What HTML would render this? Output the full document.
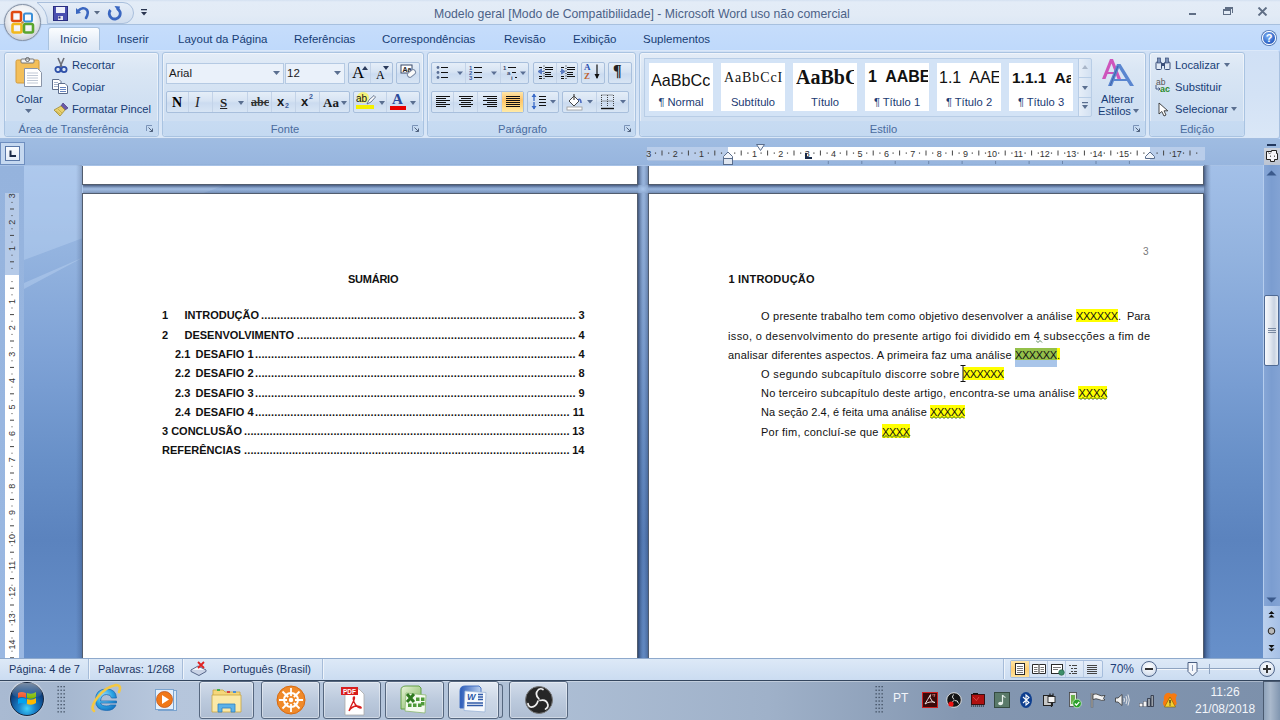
<!DOCTYPE html>
<html><head><meta charset="utf-8">
<style>
*{box-sizing:border-box;margin:0;padding:0}
html,body{width:1280px;height:720px;overflow:hidden;background:#bfdbff;font-family:"Liberation Sans",sans-serif;position:relative}
.a{position:absolute;white-space:nowrap}
#title{left:0;top:0;width:1280px;height:25px;background:linear-gradient(#d3e0f1 0,#e3ecf7 8%,#e2ebf6 60%,#dde8f5);border-bottom:1px solid #a7c0de}
#tabs{left:0;top:25px;width:1280px;height:25px;background:linear-gradient(#c6ddfb,#bfd9fb)}
#ribbon{left:0;top:50px;width:1280px;height:89px;background:linear-gradient(#d0e0f5,#d3e2f5 50%,#dae7f7);border-top:1px solid #dbe8f9;border-right:1px solid #a9c1e0;border-bottom:1px solid #a3bde0;border-radius:0 3px 3px 0}
#rulerrow{left:0;top:139px;width:1280px;height:26px;background:linear-gradient(#9fbce2,#97b5de)}
#docbg{left:24px;top:165px;width:1239px;height:493px;background:linear-gradient(#a3c0e8 0%,#93b3df 18%,#7da1d5 40%,#6890c8 60%,#5b83be 76%,#6790ca 100%)}
#vrulcol{left:0;top:165px;width:24px;height:493px;background:linear-gradient(#95b3dd,#98b6e0 50%,#9ab8e2)}
#status{left:0;top:658px;width:1280px;height:22px;background:linear-gradient(#dde9f7,#cbdcf1);border-top:1px solid #8ea9cc}
#taskbar{left:0;top:680px;width:1280px;height:40px;background:linear-gradient(90deg,#a9bad2 0,#a5b7cf 5%,#b6c6dc 12%,#b3c4da 35%,#9fb1c9 60%,#8497b1 75%,#7c90ab 100%)}
.grp{top:52px;height:85px;border:1px solid #a9c3e1;border-radius:3px;background:linear-gradient(#e3ecf7 0%,#dae6f4 20%,#d0e0f2 60%,#cfdff2 80%);box-shadow:inset 0 0 0 1px rgba(255,255,255,0.45)}
.lbl{top:121px;height:15px;font-size:11.2px;line-height:15px;padding-top:1px;color:#4a6c9e;text-align:center;background:linear-gradient(#c7dbf2,#c4d9f1);border-radius:0 0 3px 3px}
.rt{font-size:11.2px;line-height:14px;color:#173d76}
.tab{top:32px;font-size:11.5px;line-height:14px;color:#173d75}
.combo{border:1px solid #b5cae3;background:#eaf1fa}
.bg{border:1px solid #a8bfdc;border-radius:2px;background:linear-gradient(#e5eef8,#d6e3f3 45%,#cbdbf0 55%,#d8e5f4)}
.dv{width:1px;background:#c3d3e8}
.serif{font-family:"Liberation Serif",serif;line-height:1}
.tile{top:63px;width:64px;height:48px;background:#fff}
.tt{position:absolute;white-space:nowrap;overflow:hidden;line-height:1}
.tl{position:absolute;left:0;top:32px;width:100%;text-align:center;font-size:11.2px;line-height:14px;color:#1b3a72}
.doc{font-size:11px;line-height:13px;color:#111}
.b{font-weight:bold}
.toc{left:162px;width:423px;height:13px}
.toc span{position:absolute;top:0}
.toc .n{left:0}
.toc i{position:absolute;top:0;height:13px;right:16px;background:radial-gradient(circle,#111 0.9px,transparent 1.1px) 0 9.5px/3.07px 3px repeat-x}
.toc .pg{right:0}
.jl{text-align:justify;text-align-last:justify}
.st{top:662px;font-size:11px;line-height:14px;color:#1b3765}
.sep{top:659px;width:2px;height:20px;border-left:1px solid #a6bcd9;border-right:1px solid #eef4fb}
.zc{top:661px;width:16px;height:16px;border-radius:50%;border:1px solid #51678c;background:radial-gradient(circle at 50% 35%,#ffffff,#dfe7f2 60%,#b5c4da)}
.tb{top:681px;height:38px;border:1px solid #56677f;border-radius:3px;background:linear-gradient(#d2dcea,#bccadd 50%,#aebdd2);box-shadow:inset 0 0 0 1px rgba(255,255,255,0.4)}

</style></head><body>
<!-- TITLE BAR -->
<div id="title" class="a"></div>
<div id="tabs" class="a"></div>
<div class="a" style="left:0;top:0;width:48px;height:48px;"></div>
<!-- QAT pill -->
<svg class="a" style="left:0;top:0" width="140" height="26" viewBox="0 0 140 26"><defs><linearGradient id="qg" x1="0" y1="0" x2="0" y2="1"><stop offset="0" stop-color="#e6eef8"/><stop offset="1" stop-color="#d0ddee"/></linearGradient></defs><path d="M37 2.5H123A10.5 10.5 0 0 1 123 23.5H47.5A25 25 0 0 0 37 2.5Z" fill="url(#qg)" stroke="#a9bfdc"/></svg>
<!-- office button -->
<div class="a" style="left:4px;top:4px;width:37px;height:37px;border-radius:50%;background:radial-gradient(circle at 50% 40%,#ffffff 0,#f1f3f6 45%,#c9ced6 80%,#9aa4b3 100%);border:1px solid #8592a6;box-shadow:0 0 1px #6d7d95"></div>
<svg class="a" style="left:9px;top:9px" width="28" height="28" viewBox="0 0 28 28">
 <rect x="3" y="3" width="9" height="9" rx="1.5" fill="none" stroke="#e04a10" stroke-width="2.6"/>
 <rect x="15" y="4.5" width="8" height="8" rx="1.5" fill="none" stroke="#3a8fd8" stroke-width="2"/>
 <rect x="3.5" y="15" width="9" height="8.5" rx="1.5" fill="none" stroke="#f2b81a" stroke-width="2.6"/>
 <rect x="15" y="15" width="9" height="8.5" rx="1.5" fill="none" stroke="#5aa52e" stroke-width="2.6"/>
 <circle cx="13.5" cy="13.5" r="1.3" fill="#c78a3a"/>
</svg>
<!-- save -->
<svg class="a" style="left:53px;top:6px" width="15" height="15" viewBox="0 0 15 15">
 <rect x="0.5" y="0.5" width="14" height="14" fill="#4a4fb0" stroke="#2a2e80"/>
 <rect x="3" y="1" width="9" height="6" fill="#eef0fa"/>
 <rect x="5" y="10" width="5" height="4" fill="#e8e8f0"/>
 <rect x="5.5" y="10.5" width="2" height="2" fill="#2a2e80"/>
</svg>
<!-- undo -->
<svg class="a" style="left:75px;top:5px" width="16" height="16" viewBox="0 0 16 16">
 <path d="M3 6 Q8 1 12 5 Q14 8 11 13" fill="none" stroke="#3a66c0" stroke-width="2.6" stroke-linecap="round"/>
 <path d="M1 3 L1 9 L6 8 Z" fill="#3a66c0"/>
</svg>
<svg class="a" style="left:94px;top:11px" width="6" height="4" viewBox="0 0 6 4"><path d="M0 0H6L3 3.5Z" fill="#5a6b86"/></svg>
<!-- redo -->
<svg class="a" style="left:106px;top:5px" width="16" height="16" viewBox="0 0 16 16">
 <path d="M11 3.5 A5.5 5.5 0 1 1 4.5 5" fill="none" stroke="#3a66c0" stroke-width="2.8"/>
 <path d="M8.5 1 L14 1.5 L12.5 7 Z" fill="#3a66c0"/>
</svg>
<!-- customize -->
<svg class="a" style="left:140px;top:8px" width="8" height="8" viewBox="0 0 8 8"><rect x="1" y="1" width="6" height="1.3" fill="#2a3550"/><path d="M1 4H7L4 7.5Z" fill="#2a3550"/></svg>
<div class="a" style="left:434px;top:7px;font-size:12.25px;color:#4c6287;white-space:pre">Modelo geral [Modo de Compatibilidade] - Microsoft Word uso não comercial</div>
<!-- window controls -->
<div class="a" style="left:1189px;top:12.5px;width:7px;height:2.5px;background:#5f6e85"></div>
<div class="a" style="left:1223px;top:9px;width:8px;height:6px;border:1px solid #5f6e85;border-top-width:2px"></div>
<div class="a" style="left:1225px;top:7px;width:8px;height:6px;border:1px solid #5f6e85;border-top-width:2px;border-left:none;border-bottom:none"></div>
<svg class="a" style="left:1257px;top:7px" width="11" height="9" viewBox="0 0 11 9"><path d="M1.5 0.5L9.5 8.5M9.5 0.5L1.5 8.5" stroke="#5f6e85" stroke-width="1.9"/></svg>
<!-- TABS -->
<div class="a" style="left:48px;top:27px;width:52px;height:24px;border:1px solid #a9c2de;border-bottom:none;border-radius:3px 3px 0 0;background:linear-gradient(#fbfdff,#e6eef8 60%,#dde8f5)"></div>
<div class="a tab" style="left:60px">Início</div>
<div class="a tab" style="left:117px">Inserir</div>
<div class="a tab" style="left:178px">Layout da Página</div>
<div class="a tab" style="left:294px">Referências</div>
<div class="a tab" style="left:382px">Correspondências</div>
<div class="a tab" style="left:504px">Revisão</div>
<div class="a tab" style="left:573px">Exibição</div>
<div class="a tab" style="left:643px">Suplementos</div>
<!-- help -->
<div class="a" style="left:1262px;top:31px;width:14px;height:14px;border-radius:50%;background:radial-gradient(circle at 40% 35%,#7fb3f5,#2a5fc4 70%,#1a3f90);border:1px solid #fff;box-shadow:0 0 0 1px #5b7fb8"></div>
<div class="a" style="left:1262px;top:31px;width:14px;height:14px;font-size:11px;font-weight:bold;color:#fff;text-align:center;line-height:14px">?</div>
<!-- RIBBON -->
<div id="ribbon" class="a"></div>
<div class="a grp" style="left:4px;width:155px"></div>
<div class="a grp" style="left:162px;width:262px"></div>
<div class="a grp" style="left:427px;width:209px"></div>
<div class="a grp" style="left:639px;width:507px"></div>
<div class="a grp" style="left:1149px;width:96px"></div>
<div class="a lbl" style="left:5px;width:153px;padding-right:16px">Área de Transferência</div>
<div class="a lbl" style="left:163px;width:260px;padding-right:16px">Fonte</div>
<div class="a lbl" style="left:428px;width:207px;padding-right:18px">Parágrafo</div>
<div class="a lbl" style="left:640px;width:505px;padding-right:18px">Estilo</div>
<div class="a lbl" style="left:1150px;width:94px">Edição</div>
<!-- dialog launchers -->
<svg class="a" style="left:146px;top:125px" width="7" height="7" viewBox="0 0 7 7"><path d="M0.5 6V0.5H6" fill="none" stroke="#7a93b8"/><path d="M2.5 2.5L6.5 6.5M6.5 3.5V6.5H3.5" fill="none" stroke="#50627e"/></svg>
<svg class="a" style="left:412px;top:125px" width="7" height="7" viewBox="0 0 7 7"><path d="M0.5 6V0.5H6" fill="none" stroke="#7a93b8"/><path d="M2.5 2.5L6.5 6.5M6.5 3.5V6.5H3.5" fill="none" stroke="#50627e"/></svg>
<svg class="a" style="left:624px;top:125px" width="7" height="7" viewBox="0 0 7 7"><path d="M0.5 6V0.5H6" fill="none" stroke="#7a93b8"/><path d="M2.5 2.5L6.5 6.5M6.5 3.5V6.5H3.5" fill="none" stroke="#50627e"/></svg>
<svg class="a" style="left:1133px;top:125px" width="7" height="7" viewBox="0 0 7 7"><path d="M0.5 6V0.5H6" fill="none" stroke="#7a93b8"/><path d="M2.5 2.5L6.5 6.5M6.5 3.5V6.5H3.5" fill="none" stroke="#50627e"/></svg>

<!-- Clipboard group -->
<svg class="a" style="left:15px;top:57px" width="28" height="31" viewBox="0 0 28 31">
 <rect x="1" y="3" width="23" height="23" rx="1.5" fill="#f3bf5a" stroke="#d39a3a"/>
 <rect x="6" y="2" width="13" height="4" rx="1" fill="#f4f4f4" stroke="#777"/>
 <circle cx="12.5" cy="2.5" r="2" fill="none" stroke="#666"/>
 <path d="M9.5 11.5H22.5L26.5 15.5V29.5H9.5Z" fill="#fff" stroke="#8a95a8"/>
 <path d="M12 16H23M12 18.5H23M12 21H23M12 23.5H23M12 26H23" stroke="#b9c2d0" stroke-width="0.9"/>
</svg>
<div class="a rt" style="left:16px;top:92px">Colar</div>
<svg class="a" style="left:25px;top:109px" width="7" height="4" viewBox="0 0 7 4"><path d="M0 0H7L3.5 4Z" fill="#5a6f90"/></svg>
<!-- scissors -->
<svg class="a" style="left:54px;top:57px" width="14" height="16" viewBox="0 0 14 16">
 <path d="M4 1L8 10M10 1L6 10" stroke="#6d6f78" stroke-width="1.6"/>
 <circle cx="4" cy="12.5" r="2.6" fill="none" stroke="#2d4fa8" stroke-width="1.8"/>
 <circle cx="10" cy="12.5" r="2.6" fill="none" stroke="#2d4fa8" stroke-width="1.8"/>
</svg>
<div class="a rt" style="left:72px;top:58px">Recortar</div>
<svg class="a" style="left:52px;top:79px" width="17" height="15" viewBox="0 0 17 15">
 <path d="M0.5 0.5H7L9 2.5V10.5H0.5Z" fill="#fff" stroke="#5c6d8c"/>
 <path d="M2 3.5H6M2 5.5H6M2 7.5H6" stroke="#7d8fb0" stroke-width="0.7"/>
 <path d="M6.5 4.5H13L15.5 7V14.5H6.5Z" fill="#fff" stroke="#5c6d8c"/>
 <path d="M8 8.5H14M8 10.5H14M8 12.5H14" stroke="#3e64b0" stroke-width="0.8"/>
</svg>
<div class="a rt" style="left:72px;top:80px">Copiar</div>
<svg class="a" style="left:53px;top:101px" width="17" height="16" viewBox="0 0 17 16">
 <path d="M10 2L15 7L12 9L8 5Z" fill="#6b5aa8" stroke="#463a80" stroke-width="0.7"/>
 <path d="M8 5L12 9L7 15L1 9Z" fill="#e8d070" stroke="#a08a30" stroke-width="0.8"/>
 <path d="M3 10L7 13M5 8L9 12" stroke="#c2a840" stroke-width="0.8"/>
</svg>
<div class="a rt" style="left:72px;top:102px">Formatar Pincel</div>

<!-- Font group -->
<div class="a combo" style="left:166px;top:63px;width:118px;height:21px"></div>
<div class="a combo" style="left:285px;top:63px;width:60px;height:21px"></div>
<div class="a" style="left:169px;top:67px;font-size:11.5px;color:#1a1a1a">Arial</div>
<div class="a" style="left:287px;top:67px;font-size:11.5px;color:#1a1a1a">12</div>
<svg class="a" style="left:273px;top:71px" width="7" height="4" viewBox="0 0 7 4"><path d="M0 0H7L3.5 4Z" fill="#5a6f90"/></svg>
<svg class="a" style="left:334px;top:71px" width="7" height="4" viewBox="0 0 7 4"><path d="M0 0H7L3.5 4Z" fill="#5a6f90"/></svg>
<div class="a bg" style="left:348px;top:62px;width:45px;height:22px"></div>
<div class="a dv" style="left:370px;top:63px;height:20px"></div>
<div class="a serif" style="left:352px;top:64px;font-size:17px">A</div>
<svg class="a" style="left:362px;top:66px" width="6" height="4" viewBox="0 0 6 4"><path d="M0 4H6L3 0Z" fill="#2a3a5a"/></svg>
<div class="a serif" style="left:376px;top:69px;font-size:12px">A</div>
<svg class="a" style="left:383px;top:66px" width="6" height="4" viewBox="0 0 6 4"><path d="M0 0H6L3 4Z" fill="#2a3a5a"/></svg>
<div class="a bg" style="left:396px;top:62px;width:24px;height:22px"></div>
<svg class="a" style="left:400px;top:64px" width="17" height="16" viewBox="0 0 17 16">
 <rect x="1" y="1" width="11" height="8" fill="#fff" stroke="#3a4a68"/>
 <text x="2.5" y="8" font-size="7" font-family="Liberation Sans" font-weight="bold" fill="#222">Aa</text>
 <rect x="7" y="7" width="9" height="5" rx="2.5" transform="rotate(-40 11.5 9.5)" fill="#fafafa" stroke="#7a8aa5"/>
</svg>
<!-- row 2 -->
<div class="a bg" style="left:166px;top:91px;width:184px;height:22px"></div>
<div class="a dv" style="left:188px;top:92px;height:20px"></div>
<div class="a dv" style="left:212px;top:92px;height:20px"></div>
<div class="a dv" style="left:247px;top:92px;height:20px"></div>
<div class="a dv" style="left:271px;top:92px;height:20px"></div>
<div class="a dv" style="left:295px;top:92px;height:20px"></div>
<div class="a dv" style="left:319px;top:92px;height:20px"></div>
<div class="a serif" style="left:172px;top:96px;font-size:14px;font-weight:bold;color:#000">N</div>
<div class="a serif" style="left:195px;top:96px;font-size:14px;font-style:italic;color:#222">I</div>
<div class="a serif" style="left:220px;top:96px;font-size:13px;font-weight:bold;color:#222;text-decoration:underline">S</div>
<svg class="a" style="left:238px;top:101px" width="6" height="4" viewBox="0 0 6 4"><path d="M0 0H6L3 4Z" fill="#5a6f90"/></svg>
<div class="a serif" style="left:251px;top:96px;font-size:12px;font-weight:bold;color:#333;text-decoration:line-through">abc</div>
<div class="a" style="left:277px;top:94px;font-size:13px;font-weight:bold;color:#1a1a1a">x</div>
<div class="a" style="left:285px;top:102px;font-size:7px;font-weight:bold;color:#3a5a9a">2</div>
<div class="a" style="left:301px;top:94px;font-size:13px;font-weight:bold;color:#1a1a1a">x</div>
<div class="a" style="left:309px;top:93px;font-size:7px;font-weight:bold;color:#3a5a9a">2</div>
<div class="a serif" style="left:323px;top:96px;font-size:13px;font-weight:bold;color:#1a1a1a">Aa</div>
<svg class="a" style="left:341px;top:101px" width="6" height="4" viewBox="0 0 6 4"><path d="M0 0H6L3 4Z" fill="#5a6f90"/></svg>
<div class="a bg" style="left:353px;top:91px;width:67px;height:22px"></div>
<div class="a dv" style="left:386px;top:92px;height:20px"></div>
<div class="a" style="left:357px;top:92px;width:12px;height:11px;border-radius:50%;background:#f4f27a"></div>
<div class="a" style="left:356px;top:93px;font-size:10px;color:#111">ab</div>
<svg class="a" style="left:366px;top:95px" width="10" height="10" viewBox="0 0 10 10"><path d="M1 9L3 5L8 0.5L9.5 2L5 7Z" fill="#fff" stroke="#4a5a78" stroke-width="0.8"/></svg>
<div class="a" style="left:356px;top:105px;width:18px;height:4px;background:#f4f000"></div>
<svg class="a" style="left:379px;top:101px" width="6" height="4" viewBox="0 0 6 4"><path d="M0 0H6L3 4Z" fill="#5a6f90"/></svg>
<div class="a serif" style="left:392px;top:92px;font-size:15px;font-weight:bold;color:#2a4a9a">A</div>
<div class="a" style="left:390px;top:106px;width:16px;height:4px;background:#e80000"></div>
<svg class="a" style="left:410px;top:101px" width="6" height="4" viewBox="0 0 6 4"><path d="M0 0H6L3 4Z" fill="#5a6f90"/></svg>
<!-- Paragraph group -->
<div class="a bg" style="left:431px;top:62px;width:98px;height:22px"></div>
<div class="a dv" style="left:465px;top:63px;height:20px"></div>
<div class="a dv" style="left:500px;top:63px;height:20px"></div>
<div class="a bg" style="left:533px;top:62px;width:45px;height:22px"></div>
<div class="a dv" style="left:556px;top:63px;height:20px"></div>
<div class="a bg" style="left:581px;top:62px;width:24px;height:22px"></div>
<div class="a bg" style="left:608px;top:62px;width:24px;height:22px"></div>
<svg class="a" style="left:435px;top:64px" width="30" height="18" viewBox="0 0 30 18">
 <circle cx="3" cy="3.5" r="1.4" fill="#5a6f95"/><circle cx="3" cy="8.5" r="1.4" fill="#5a6f95"/><circle cx="3" cy="13.5" r="1.4" fill="#5a6f95"/>
 <path d="M6 3.5H13M6 8.5H13M6 13.5H13" stroke="#111" stroke-width="1"/>
 <path d="M22 7.5H28L25 11Z" fill="#5a6f95"/>
</svg>
<svg class="a" style="left:469px;top:64px" width="30" height="18" viewBox="0 0 30 18">
 <text x="0" y="6" font-size="6" font-family="Liberation Sans" font-weight="bold" fill="#3a5aa0">1</text>
 <text x="0" y="11" font-size="6" font-family="Liberation Sans" font-weight="bold" fill="#3a5aa0">2</text>
 <text x="0" y="16" font-size="6" font-family="Liberation Sans" font-weight="bold" fill="#3a5aa0">3</text>
 <path d="M5 3.5H13M5 8.5H13M5 13.5H13" stroke="#111" stroke-width="1"/>
 <path d="M22 7.5H28L25 11Z" fill="#5a6f95"/>
</svg>
<svg class="a" style="left:503px;top:64px" width="26" height="18" viewBox="0 0 26 18">
 <text x="0" y="6" font-size="6" font-family="Liberation Sans" font-weight="bold" fill="#3a4a70">1</text>
 <text x="4" y="11" font-size="6" font-family="Liberation Sans" font-weight="bold" fill="#3a4a70">a</text>
 <text x="8" y="16" font-size="6" font-family="Liberation Sans" font-weight="bold" fill="#3a4a70">i</text>
 <path d="M5 3.5H13M9 8.5H13M12 13.5H14" stroke="#111" stroke-width="1"/>
 <path d="M17 7.5H23L20 11Z" fill="#5a6f95"/>
</svg>
<svg class="a" style="left:537px;top:64px" width="40" height="18" viewBox="0 0 40 18">
 <path d="M7 1.5V16.5" stroke="#111" stroke-width="0.9" stroke-dasharray="1,1.5"/>
 <path d="M2 3.5H5M8 3.5H16M8 5.5H16M8 8.5H14M8 10.5H14M2 12.5H5M8 12.5H16M2 14.5H5" stroke="#111" stroke-width="1.2"/>
 <path d="M1 7.5L4.5 5V10Z M3 7.5H7" fill="#5a7ac0" stroke="#5a7ac0" stroke-width="1"/>
 <path d="M29 1.5V16.5" stroke="#111" stroke-width="0.9" stroke-dasharray="1,1.5"/>
 <path d="M24 3.5H27M30 3.5H38M30 5.5H38M30 8.5H36M30 10.5H36M24 12.5H27M30 12.5H38M24 14.5H27" stroke="#111" stroke-width="1.2"/>
 <path d="M28 7.5L24.5 5V10Z M23 7.5H26" fill="#5a7ac0" stroke="#5a7ac0" stroke-width="1"/>
</svg>
<div class="a serif" style="left:584px;top:63px;font-size:9px;font-weight:bold;color:#2a50b0;line-height:9px">A<br><span style="color:#c06030">Z</span></div>
<svg class="a" style="left:594px;top:64px" width="6" height="16" viewBox="0 0 6 16"><path d="M3 0.5V14" stroke="#111" stroke-width="1.2"/><path d="M0.5 10L3 15L5.5 10Z" fill="#111"/></svg>
<div class="a serif" style="left:613px;top:63px;font-size:16px;font-weight:bold;color:#222">¶</div>
<!-- row2 -->
<div class="a bg" style="left:431px;top:91px;width:93px;height:22px"></div>
<div class="a" style="left:502px;top:92px;width:21px;height:20px;background:linear-gradient(#ffe6a8,#ffc56a 40%,#ffd77f 70%,#ffeaa8)"></div>
<div class="a dv" style="left:453px;top:92px;height:20px"></div>
<div class="a dv" style="left:477px;top:92px;height:20px"></div>
<div class="a dv" style="left:501px;top:92px;height:20px"></div>
<svg class="a" style="left:436px;top:95px" width="90" height="13" viewBox="0 0 90 13">
 <g stroke="#111" stroke-width="1.1">
 <path d="M0 1.5H14M0 3.5H10M0 5.5H14M0 7.5H10M0 9.5H14M0 11.5H10"/>
 <path d="M23 1.5H37M25 3.5H35M23 5.5H37M25 7.5H35M23 9.5H37M25 11.5H35"/>
 <path d="M47 1.5H61M51 3.5H61M47 5.5H61M51 7.5H61M47 9.5H61M51 11.5H61"/>
 <path d="M70 1.5H84M70 3.5H84M70 5.5H84M70 7.5H84M70 9.5H84M70 11.5H84"/>
 </g>
</svg>
<div class="a bg" style="left:527px;top:91px;width:32px;height:22px"></div>
<svg class="a" style="left:531px;top:93px" width="26" height="18" viewBox="0 0 26 18">
 <path d="M3 1V8M3 9V16" stroke="#3a6ac8" stroke-width="1.3"/>
 <path d="M0.5 4L3 0.5L5.5 4ZM0.5 13L3 16.5L5.5 13Z" fill="#3a6ac8"/>
 <path d="M8 3.5H15M8 6.5H15M8 9.5H15M8 12.5H15" stroke="#111" stroke-width="1.1"/>
 <path d="M19 7H25L22 10.5Z" fill="#5a6f95"/>
</svg>
<div class="a bg" style="left:562px;top:91px;width:67px;height:22px"></div>
<div class="a dv" style="left:596px;top:92px;height:20px"></div>
<svg class="a" style="left:566px;top:93px" width="28" height="18" viewBox="0 0 28 18">
 <path d="M3 8L8 3L13 8L8 13Z" fill="#fff" stroke="#333" stroke-width="0.9"/>
 <path d="M8 1V7" stroke="#555" stroke-width="1.3"/>
 <path d="M12 7Q15 5 15 10" fill="none" stroke="#4a6ac0" stroke-width="1.6"/>
 <rect x="1" y="14" width="15" height="3" fill="#fff" stroke="#999" stroke-width="0.8"/>
 <path d="M21 7H27L24 10.5Z" fill="#5a6f95"/>
</svg>
<svg class="a" style="left:600px;top:93px" width="28" height="18" viewBox="0 0 28 18">
 <path d="M1.5 2V14M7.5 2V14M13.5 2V14M1.5 2H13.5M1.5 8H13.5" stroke="#333" stroke-width="0.9" stroke-dasharray="1,1"/>
 <path d="M1 15.5H14" stroke="#111" stroke-width="1.4"/>
 <path d="M20 7H26L23 10.5Z" fill="#5a6f95"/>
</svg>
<!-- Styles gallery -->
<div class="a" style="left:644px;top:58px;width:435px;height:59px;border:1px solid #b8cde6;border-right:none;background:#d3e3f6"></div>
<div class="a tile" style="left:649px"><div class="tt" style="left:2px;top:9px;font-size:16.2px;color:#111">AaBbCc</div><div class="tl">¶ Normal</div></div>
<div class="a tile" style="left:721px"><div class="tt" style="left:3px;top:8px;font-family:'Liberation Serif',serif;font-size:14px;letter-spacing:0.9px;color:#111">AaBbCcI</div><div class="tl">Subtítulo</div></div>
<div class="a tile" style="left:793px"><div class="tt" style="left:3px;top:4px;font-family:'Liberation Serif',serif;font-size:20px;font-weight:bold;color:#111;width:58px">AaBbC</div><div class="tl">Título</div></div>
<div class="a tile" style="left:865px"><div class="tt" style="left:3px;top:6px;font-size:16px;font-weight:bold;color:#111;white-space:pre;width:60px">1  AABE</div><div class="tl">¶ Título 1</div></div>
<div class="a tile" style="left:937px"><div class="tt" style="left:2px;top:7px;font-size:16px;color:#111;white-space:pre;width:60px">1.1  AAE</div><div class="tl">¶ Título 2</div></div>
<div class="a tile" style="left:1009px"><div class="tt" style="left:3px;top:7px;font-size:15.5px;font-weight:bold;color:#111;white-space:pre;width:59px">1.1.1  Aa</div><div class="tl">¶ Título 3</div></div>
<div class="a" style="left:1078px;top:58px;width:14px;height:59px;border:1px solid #b8cde6;border-radius:0 2px 2px 0;background:linear-gradient(90deg,#e6eef8,#d3e1f2)"></div>
<div class="a" style="left:1079px;top:77px;width:12px;height:1px;background:#b8cde6"></div>
<div class="a" style="left:1079px;top:97px;width:12px;height:1px;background:#b8cde6"></div>
<svg class="a" style="left:1082px;top:65px" width="6" height="4" viewBox="0 0 6 4"><path d="M0 4H6L3 0Z" fill="#a9b6c8"/></svg>
<svg class="a" style="left:1082px;top:86px" width="6" height="4" viewBox="0 0 6 4"><path d="M0 0H6L3 4Z" fill="#5a6f90"/></svg>
<svg class="a" style="left:1082px;top:102px" width="6" height="8" viewBox="0 0 6 8"><rect x="0" y="0" width="6" height="1.2" fill="#5a6f90"/><path d="M0 3H6L3 7Z" fill="#5a6f90"/></svg>
<!-- Alterar estilos -->
<svg class="a" style="left:1101px;top:58px" width="36" height="30" viewBox="0 0 36 30">
 <path d="M1 21L9 1H12L20 21H16.5L10.5 5.5L4.5 21Z M6 14H15V16H6Z" fill="#cc4db8" opacity="0.95"/>
 <path d="M7 28L16 6H19.5L33 28H29L18 10L11 28Z M12 21H26V23H12Z" fill="#5a86d0"/>
 <path d="M9 28L17 8" stroke="#3a5aa0" stroke-width="0.8"/>
</svg>
<div class="a rt" style="left:1101px;top:92px">Alterar</div>
<div class="a rt" style="left:1098px;top:104px">Estilos</div>
<svg class="a" style="left:1133px;top:109px" width="6" height="4" viewBox="0 0 6 4"><path d="M0 0H6L3 4Z" fill="#5a6f90"/></svg>
<!-- Editing -->
<svg class="a" style="left:1155px;top:57px" width="16" height="13" viewBox="0 0 16 13">
 <rect x="1" y="5" width="5.5" height="7.5" rx="1" fill="#dfe8f5" stroke="#3a4e78"/>
 <rect x="9.5" y="5" width="5.5" height="7.5" rx="1" fill="#dfe8f5" stroke="#3a4e78"/>
 <rect x="2.5" y="1" width="3" height="5" fill="#7a90b8" stroke="#3a4e78" stroke-width="0.7"/>
 <rect x="10.5" y="1" width="3" height="5" fill="#7a90b8" stroke="#3a4e78" stroke-width="0.7"/>
 <rect x="6" y="6" width="4" height="3" fill="#3a4e78"/>
</svg>
<div class="a rt" style="left:1175px;top:58px">Localizar</div>
<svg class="a" style="left:1224px;top:63px" width="6" height="4" viewBox="0 0 6 4"><path d="M0 0H6L3 4Z" fill="#5a6f90"/></svg>
<div class="a" style="left:1156px;top:78px;font-size:8.5px;color:#555;line-height:8px">ab</div>
<div class="a" style="left:1160px;top:85px;font-size:9px;font-weight:bold;color:#2a8a2a;line-height:8px">ac</div>
<svg class="a" style="left:1155px;top:85px" width="6" height="7" viewBox="0 0 6 7"><path d="M1 0V4H5M3.5 2.5L5 4L3.5 5.5" fill="none" stroke="#3a4e78" stroke-width="0.9"/></svg>
<div class="a rt" style="left:1175px;top:80px">Substituir</div>
<svg class="a" style="left:1158px;top:102px" width="11" height="15" viewBox="0 0 11 15"><path d="M1 1V12L3.8 9.5L6 14L8 13L6 8.8H9.8Z" fill="#fff" stroke="#333" stroke-width="0.9"/></svg>
<div class="a rt" style="left:1175px;top:102px">Selecionar</div>
<svg class="a" style="left:1231px;top:107px" width="6" height="4" viewBox="0 0 6 4"><path d="M0 0H6L3 4Z" fill="#5a6f90"/></svg>
<!-- RULER ROW -->
<div id="rulerrow" class="a"></div>
<div class="a" style="left:0px;top:142px;width:25px;height:23px;border:1px solid #6f8fc0;background:#c5d8f0"></div>
<div class="a" style="left:5px;top:146px;width:15px;height:15px;border:1px solid #5a78a8;background:linear-gradient(#fafcff,#e4ecf7)"></div>
<svg class="a" style="left:9px;top:150px" width="8" height="8" viewBox="0 0 8 8"><path d="M1.5 0.5V6H7" fill="none" stroke="#1a2a48" stroke-width="2"/></svg>
<div class="a" style="left:647px;top:147px;width:558px;height:13px;background:#b9cdea"></div>
<div class="a" style="left:728px;top:147px;width:422px;height:13px;background:#fff"></div>
<div class="a" style="left:648px;top:160px;width:556px;height:1px;background:#a9bfdf"></div>
<svg class="a" style="left:640px;top:144px" width="580" height="22" viewBox="0 0 580 22" id="hruler"><text x="8.8" y="13" font-size="9" font-family="Liberation Sans" fill="#333" text-anchor="middle">3</text><text x="35.2" y="13" font-size="9" font-family="Liberation Sans" fill="#333" text-anchor="middle">2</text><text x="61.6" y="13" font-size="9" font-family="Liberation Sans" fill="#333" text-anchor="middle">1</text><text x="114.4" y="13" font-size="9" font-family="Liberation Sans" fill="#333" text-anchor="middle">1</text><text x="140.8" y="13" font-size="9" font-family="Liberation Sans" fill="#333" text-anchor="middle">2</text><text x="167.2" y="13" font-size="9" font-family="Liberation Sans" fill="#333" text-anchor="middle">3</text><text x="193.6" y="13" font-size="9" font-family="Liberation Sans" fill="#333" text-anchor="middle">4</text><text x="220.0" y="13" font-size="9" font-family="Liberation Sans" fill="#333" text-anchor="middle">5</text><text x="246.4" y="13" font-size="9" font-family="Liberation Sans" fill="#333" text-anchor="middle">6</text><text x="272.8" y="13" font-size="9" font-family="Liberation Sans" fill="#333" text-anchor="middle">7</text><text x="299.2" y="13" font-size="9" font-family="Liberation Sans" fill="#333" text-anchor="middle">8</text><text x="325.6" y="13" font-size="9" font-family="Liberation Sans" fill="#333" text-anchor="middle">9</text><text x="352.0" y="13" font-size="9" font-family="Liberation Sans" fill="#333" text-anchor="middle">10</text><text x="378.4" y="13" font-size="9" font-family="Liberation Sans" fill="#333" text-anchor="middle">11</text><text x="404.8" y="13" font-size="9" font-family="Liberation Sans" fill="#333" text-anchor="middle">12</text><text x="431.2" y="13" font-size="9" font-family="Liberation Sans" fill="#333" text-anchor="middle">13</text><text x="457.6" y="13" font-size="9" font-family="Liberation Sans" fill="#333" text-anchor="middle">14</text><text x="484.0" y="13" font-size="9" font-family="Liberation Sans" fill="#333" text-anchor="middle">15</text><text x="536.8" y="13" font-size="9" font-family="Liberation Sans" fill="#333" text-anchor="middle">17</text><rect x="14.9" y="8.5" width="1.2" height="1.2" fill="#444"/><rect x="21.5" y="6.5" width="1" height="5" fill="#444"/><rect x="28.1" y="8.5" width="1.2" height="1.2" fill="#444"/><rect x="41.3" y="8.5" width="1.2" height="1.2" fill="#444"/><rect x="47.9" y="6.5" width="1" height="5" fill="#444"/><rect x="54.5" y="8.5" width="1.2" height="1.2" fill="#444"/><rect x="67.7" y="8.5" width="1.2" height="1.2" fill="#444"/><rect x="74.3" y="6.5" width="1" height="5" fill="#444"/><rect x="80.9" y="8.5" width="1.2" height="1.2" fill="#444"/><rect x="94.1" y="8.5" width="1.2" height="1.2" fill="#444"/><rect x="100.7" y="6.5" width="1" height="5" fill="#444"/><rect x="107.3" y="8.5" width="1.2" height="1.2" fill="#444"/><rect x="120.5" y="8.5" width="1.2" height="1.2" fill="#444"/><rect x="127.1" y="6.5" width="1" height="5" fill="#444"/><rect x="133.7" y="8.5" width="1.2" height="1.2" fill="#444"/><rect x="146.9" y="8.5" width="1.2" height="1.2" fill="#444"/><rect x="153.5" y="6.5" width="1" height="5" fill="#444"/><rect x="160.1" y="8.5" width="1.2" height="1.2" fill="#444"/><rect x="173.3" y="8.5" width="1.2" height="1.2" fill="#444"/><rect x="179.9" y="6.5" width="1" height="5" fill="#444"/><rect x="186.5" y="8.5" width="1.2" height="1.2" fill="#444"/><rect x="199.7" y="8.5" width="1.2" height="1.2" fill="#444"/><rect x="206.3" y="6.5" width="1" height="5" fill="#444"/><rect x="212.9" y="8.5" width="1.2" height="1.2" fill="#444"/><rect x="226.1" y="8.5" width="1.2" height="1.2" fill="#444"/><rect x="232.7" y="6.5" width="1" height="5" fill="#444"/><rect x="239.3" y="8.5" width="1.2" height="1.2" fill="#444"/><rect x="252.5" y="8.5" width="1.2" height="1.2" fill="#444"/><rect x="259.1" y="6.5" width="1" height="5" fill="#444"/><rect x="265.7" y="8.5" width="1.2" height="1.2" fill="#444"/><rect x="278.9" y="8.5" width="1.2" height="1.2" fill="#444"/><rect x="285.5" y="6.5" width="1" height="5" fill="#444"/><rect x="292.1" y="8.5" width="1.2" height="1.2" fill="#444"/><rect x="305.3" y="8.5" width="1.2" height="1.2" fill="#444"/><rect x="311.9" y="6.5" width="1" height="5" fill="#444"/><rect x="318.5" y="8.5" width="1.2" height="1.2" fill="#444"/><rect x="331.7" y="8.5" width="1.2" height="1.2" fill="#444"/><rect x="338.3" y="6.5" width="1" height="5" fill="#444"/><rect x="344.9" y="8.5" width="1.2" height="1.2" fill="#444"/><rect x="358.1" y="8.5" width="1.2" height="1.2" fill="#444"/><rect x="364.7" y="6.5" width="1" height="5" fill="#444"/><rect x="371.3" y="8.5" width="1.2" height="1.2" fill="#444"/><rect x="384.5" y="8.5" width="1.2" height="1.2" fill="#444"/><rect x="391.1" y="6.5" width="1" height="5" fill="#444"/><rect x="397.7" y="8.5" width="1.2" height="1.2" fill="#444"/><rect x="410.9" y="8.5" width="1.2" height="1.2" fill="#444"/><rect x="417.5" y="6.5" width="1" height="5" fill="#444"/><rect x="424.1" y="8.5" width="1.2" height="1.2" fill="#444"/><rect x="437.3" y="8.5" width="1.2" height="1.2" fill="#444"/><rect x="443.9" y="6.5" width="1" height="5" fill="#444"/><rect x="450.5" y="8.5" width="1.2" height="1.2" fill="#444"/><rect x="463.7" y="8.5" width="1.2" height="1.2" fill="#444"/><rect x="470.3" y="6.5" width="1" height="5" fill="#444"/><rect x="476.9" y="8.5" width="1.2" height="1.2" fill="#444"/><rect x="490.1" y="8.5" width="1.2" height="1.2" fill="#444"/><rect x="496.7" y="6.5" width="1" height="5" fill="#444"/><rect x="503.3" y="8.5" width="1.2" height="1.2" fill="#444"/><rect x="516.5" y="8.5" width="1.2" height="1.2" fill="#444"/><rect x="523.1" y="6.5" width="1" height="5" fill="#444"/><rect x="529.7" y="8.5" width="1.2" height="1.2" fill="#444"/><rect x="542.9" y="8.5" width="1.2" height="1.2" fill="#444"/><rect x="549.5" y="6.5" width="1" height="5" fill="#444"/><rect x="556.1" y="8.5" width="1.2" height="1.2" fill="#444"/><path d="M116.5 0.5H124.5L120.5 6.5Z" fill="#f2f5fa" stroke="#5a6d8c"/><path d="M83.5 14.5V12.5L88 8L92.5 12.5V14.5Z" fill="#f2f5fa" stroke="#5a6d8c"/><rect x="83.5" y="14.5" width="9" height="6" fill="#dfe6f0" stroke="#5a6d8c"/><path d="M505.5 14.5V12.5L510 8L514.5 12.5V14.5Z" fill="#f2f5fa" stroke="#5a6d8c"/><path d="M166 9V14H172" fill="none" stroke="#1a2a48" stroke-width="2"/><rect x="187.8" y="17" width="1" height="3" fill="#6d86aa"/><rect x="221.3" y="17" width="1" height="3" fill="#6d86aa"/><rect x="254.7" y="17" width="1" height="3" fill="#6d86aa"/><rect x="288.2" y="17" width="1" height="3" fill="#6d86aa"/><rect x="321.6" y="17" width="1" height="3" fill="#6d86aa"/><rect x="355.1" y="17" width="1" height="3" fill="#6d86aa"/><rect x="388.6" y="17" width="1" height="3" fill="#6d86aa"/><rect x="422.0" y="17" width="1" height="3" fill="#6d86aa"/><rect x="455.5" y="17" width="1" height="3" fill="#6d86aa"/><rect x="488.9" y="17" width="1" height="3" fill="#6d86aa"/></svg>
<div class="a" style="left:1267px;top:144px;width:9px;height:2px;background:#22385e"></div>
<div class="a" style="left:1264px;top:148px;width:16px;height:17px;background:linear-gradient(#cdd3dd,#bcc4d2)"></div>
<svg class="a" style="left:1265px;top:149px" width="14" height="14" viewBox="0 0 14 14"><path d="M1.5 2.5H6.5V1.5H11.5V4.5H12.5V10.5H9.5V12.5H5.5V10.5H1.5Z" fill="#f4f4f8" stroke="#222" stroke-width="1"/><path d="M3.5 3.5L4.5 5L6 3.5" fill="none" stroke="#444" stroke-width="0.8"/><path d="M5.5 6.5V8M9.5 6.5V8" stroke="#666"/></svg>

<!-- DOC AREA -->
<div id="vrulcol" class="a"></div>
<div id="docbg" class="a"></div>
<svg class="a" style="left:24px;top:165px" width="300" height="160" viewBox="0 0 300 160">
 <path d="M0 0V95L255 0Z" fill="#c4daf6" opacity="0.35"/>
 <path d="M0 118L60 92L0 124Z" fill="#c8dcf6" opacity="0.35"/>
</svg>
<!-- vertical ruler -->
<div class="a" style="left:5px;top:193px;width:14px;height:465px;background:#fff"></div>
<div class="a" style="left:5px;top:193px;width:14px;height:82px;background:#b5cae8"></div>
<svg class="a" style="left:3px;top:190px" width="18" height="470" viewBox="0 0 18 470" id="vruler"><text x="0" y="0" transform="translate(12.3 5.8) rotate(-90)" font-size="9" font-family="Liberation Sans" fill="#333" text-anchor="middle">3</text><text x="0" y="0" transform="translate(12.3 32.2) rotate(-90)" font-size="9" font-family="Liberation Sans" fill="#333" text-anchor="middle">2</text><text x="0" y="0" transform="translate(12.3 58.6) rotate(-90)" font-size="9" font-family="Liberation Sans" fill="#333" text-anchor="middle">1</text><text x="0" y="0" transform="translate(12.3 111.4) rotate(-90)" font-size="9" font-family="Liberation Sans" fill="#333" text-anchor="middle">1</text><text x="0" y="0" transform="translate(12.3 137.8) rotate(-90)" font-size="9" font-family="Liberation Sans" fill="#333" text-anchor="middle">2</text><text x="0" y="0" transform="translate(12.3 164.2) rotate(-90)" font-size="9" font-family="Liberation Sans" fill="#333" text-anchor="middle">3</text><text x="0" y="0" transform="translate(12.3 190.6) rotate(-90)" font-size="9" font-family="Liberation Sans" fill="#333" text-anchor="middle">4</text><text x="0" y="0" transform="translate(12.3 217.0) rotate(-90)" font-size="9" font-family="Liberation Sans" fill="#333" text-anchor="middle">5</text><text x="0" y="0" transform="translate(12.3 243.4) rotate(-90)" font-size="9" font-family="Liberation Sans" fill="#333" text-anchor="middle">6</text><text x="0" y="0" transform="translate(12.3 269.8) rotate(-90)" font-size="9" font-family="Liberation Sans" fill="#333" text-anchor="middle">7</text><text x="0" y="0" transform="translate(12.3 296.2) rotate(-90)" font-size="9" font-family="Liberation Sans" fill="#333" text-anchor="middle">8</text><text x="0" y="0" transform="translate(12.3 322.6) rotate(-90)" font-size="9" font-family="Liberation Sans" fill="#333" text-anchor="middle">9</text><text x="0" y="0" transform="translate(12.3 349.0) rotate(-90)" font-size="9" font-family="Liberation Sans" fill="#333" text-anchor="middle">10</text><text x="0" y="0" transform="translate(12.3 375.4) rotate(-90)" font-size="9" font-family="Liberation Sans" fill="#333" text-anchor="middle">11</text><text x="0" y="0" transform="translate(12.3 401.8) rotate(-90)" font-size="9" font-family="Liberation Sans" fill="#333" text-anchor="middle">12</text><text x="0" y="0" transform="translate(12.3 428.2) rotate(-90)" font-size="9" font-family="Liberation Sans" fill="#333" text-anchor="middle">13</text><text x="0" y="0" transform="translate(12.3 454.6) rotate(-90)" font-size="9" font-family="Liberation Sans" fill="#333" text-anchor="middle">14</text><rect x="8.5" y="11.9" width="1" height="1" fill="#444"/><rect x="7" y="18.5" width="4" height="1" fill="#444"/><rect x="8.5" y="25.1" width="1" height="1" fill="#444"/><rect x="8.5" y="38.3" width="1" height="1" fill="#444"/><rect x="7" y="44.9" width="4" height="1" fill="#444"/><rect x="8.5" y="51.5" width="1" height="1" fill="#444"/><rect x="8.5" y="64.7" width="1" height="1" fill="#444"/><rect x="7" y="71.3" width="4" height="1" fill="#444"/><rect x="8.5" y="77.9" width="1" height="1" fill="#444"/><rect x="8.5" y="91.1" width="1" height="1" fill="#444"/><rect x="7" y="97.7" width="4" height="1" fill="#444"/><rect x="8.5" y="104.3" width="1" height="1" fill="#444"/><rect x="8.5" y="117.5" width="1" height="1" fill="#444"/><rect x="7" y="124.1" width="4" height="1" fill="#444"/><rect x="8.5" y="130.7" width="1" height="1" fill="#444"/><rect x="8.5" y="143.9" width="1" height="1" fill="#444"/><rect x="7" y="150.5" width="4" height="1" fill="#444"/><rect x="8.5" y="157.1" width="1" height="1" fill="#444"/><rect x="8.5" y="170.3" width="1" height="1" fill="#444"/><rect x="7" y="176.9" width="4" height="1" fill="#444"/><rect x="8.5" y="183.5" width="1" height="1" fill="#444"/><rect x="8.5" y="196.7" width="1" height="1" fill="#444"/><rect x="7" y="203.3" width="4" height="1" fill="#444"/><rect x="8.5" y="209.9" width="1" height="1" fill="#444"/><rect x="8.5" y="223.1" width="1" height="1" fill="#444"/><rect x="7" y="229.7" width="4" height="1" fill="#444"/><rect x="8.5" y="236.3" width="1" height="1" fill="#444"/><rect x="8.5" y="249.5" width="1" height="1" fill="#444"/><rect x="7" y="256.1" width="4" height="1" fill="#444"/><rect x="8.5" y="262.7" width="1" height="1" fill="#444"/><rect x="8.5" y="275.9" width="1" height="1" fill="#444"/><rect x="7" y="282.5" width="4" height="1" fill="#444"/><rect x="8.5" y="289.1" width="1" height="1" fill="#444"/><rect x="8.5" y="302.3" width="1" height="1" fill="#444"/><rect x="7" y="308.9" width="4" height="1" fill="#444"/><rect x="8.5" y="315.5" width="1" height="1" fill="#444"/><rect x="8.5" y="328.7" width="1" height="1" fill="#444"/><rect x="7" y="335.3" width="4" height="1" fill="#444"/><rect x="8.5" y="341.9" width="1" height="1" fill="#444"/><rect x="8.5" y="355.1" width="1" height="1" fill="#444"/><rect x="7" y="361.7" width="4" height="1" fill="#444"/><rect x="8.5" y="368.3" width="1" height="1" fill="#444"/><rect x="8.5" y="381.5" width="1" height="1" fill="#444"/><rect x="7" y="388.1" width="4" height="1" fill="#444"/><rect x="8.5" y="394.7" width="1" height="1" fill="#444"/><rect x="8.5" y="407.9" width="1" height="1" fill="#444"/><rect x="7" y="414.5" width="4" height="1" fill="#444"/><rect x="8.5" y="421.1" width="1" height="1" fill="#444"/><rect x="8.5" y="434.3" width="1" height="1" fill="#444"/><rect x="7" y="440.9" width="4" height="1" fill="#444"/><rect x="8.5" y="447.5" width="1" height="1" fill="#444"/><rect x="8.5" y="460.7" width="1" height="1" fill="#444"/><rect x="7" y="467.3" width="4" height="1" fill="#444"/></svg>
<!-- pages -->
<div class="a" style="left:82px;top:165px;width:556px;height:20px;background:#fff;border:1px solid #525d6e;border-top:none;box-shadow:1px 1px 2px rgba(25,45,85,0.4)"></div>
<div class="a" style="left:648px;top:165px;width:556px;height:20px;background:#fff;border:1px solid #525d6e;border-top:none;box-shadow:1px 1px 2px rgba(25,45,85,0.4)"></div>
<div class="a" style="left:82px;top:193px;width:556px;height:470px;background:#fff;border:1px solid #525d6e;border-bottom:none;box-shadow:1px 1px 2px rgba(25,45,85,0.4)"></div>
<div class="a" style="left:648px;top:193px;width:556px;height:470px;background:#fff;border:1px solid #525d6e;border-bottom:none;box-shadow:1px 1px 2px rgba(25,45,85,0.4)"></div>

<div class="a" style="left:638px;top:165px;width:10px;height:20px;background:linear-gradient(90deg,rgba(15,30,65,0.45),rgba(15,30,65,0.1) 45%,rgba(15,30,65,0.06) 60%,rgba(15,30,65,0.3))"></div>
<div class="a" style="left:638px;top:193px;width:10px;height:465px;background:linear-gradient(90deg,rgba(15,30,65,0.45),rgba(15,30,65,0.1) 45%,rgba(15,30,65,0.06) 60%,rgba(15,30,65,0.3))"></div>
<div class="a" style="left:83px;top:185px;width:555px;height:8px;background:linear-gradient(rgba(15,30,65,0.42),rgba(15,30,65,0.06) 50%,rgba(15,30,65,0.25))"></div>
<div class="a" style="left:648px;top:185px;width:556px;height:8px;background:linear-gradient(rgba(15,30,65,0.42),rgba(15,30,65,0.06) 50%,rgba(15,30,65,0.25))"></div>
<div class="a" style="left:638px;top:185px;width:10px;height:8px;background:radial-gradient(ellipse at center,rgba(200,225,255,0.25),rgba(15,30,65,0.15) 90%)"></div>
<div class="a" style="left:0;top:165px;width:1263px;height:1px;background:#a8c2e6"></div>
<div class="a" style="left:1204px;top:165px;width:7px;height:493px;background:linear-gradient(90deg,rgba(15,30,65,0.4),rgba(15,30,65,0))"></div>
<div class="a" style="left:76px;top:165px;width:6px;height:493px;background:linear-gradient(90deg,rgba(15,30,65,0),rgba(15,30,65,0.2))"></div>
<div class="a" style="left:348px;top:273px;font-size:11px;line-height:13px;color:#111;font-weight:bold;letter-spacing:-0.25px">SUMÁRIO</div>
<div class="a" style="left:162px;top:309px;font-size:11px;line-height:13px;color:#111;font-weight:bold">1</div>
<div class="a" style="left:184.5px;top:309px;font-size:11px;line-height:13px;color:#111;font-weight:bold">INTRODUÇÃO</div>
<div class="a" style="left:261px;top:309px;width:319px;height:13px;overflow:hidden;font-size:11px;line-height:13px;color:#111;font-weight:bold;letter-spacing:0.154px">..................................................................................................</div>
<div class="a" style="right:695.5px;top:309px;font-size:11px;line-height:13px;color:#111;font-weight:bold">3</div>
<div class="a" style="left:162px;top:329px;font-size:11px;line-height:13px;color:#111;font-weight:bold">2</div>
<div class="a" style="left:184.5px;top:329px;font-size:11px;line-height:13px;color:#111;font-weight:bold">DESENVOLVIMENTO</div>
<div class="a" style="left:297px;top:329px;width:283px;height:13px;overflow:hidden;font-size:11px;line-height:13px;color:#111;font-weight:bold;letter-spacing:0.147px">.......................................................................................</div>
<div class="a" style="right:695.5px;top:329px;font-size:11px;line-height:13px;color:#111;font-weight:bold">4</div>
<div class="a" style="left:175px;top:348px;font-size:11px;line-height:13px;color:#111;font-weight:bold">2.1</div>
<div class="a" style="left:195.5px;top:348px;font-size:11px;line-height:13px;color:#111;font-weight:bold">DESAFIO 1</div>
<div class="a" style="left:255px;top:348px;width:325px;height:13px;overflow:hidden;font-size:11px;line-height:13px;color:#111;font-weight:bold;letter-spacing:0.150px">....................................................................................................</div>
<div class="a" style="right:695.5px;top:348px;font-size:11px;line-height:13px;color:#111;font-weight:bold">4</div>
<div class="a" style="left:175px;top:367px;font-size:11px;line-height:13px;color:#111;font-weight:bold">2.2</div>
<div class="a" style="left:195.5px;top:367px;font-size:11px;line-height:13px;color:#111;font-weight:bold">DESAFIO 2</div>
<div class="a" style="left:255px;top:367px;width:325px;height:13px;overflow:hidden;font-size:11px;line-height:13px;color:#111;font-weight:bold;letter-spacing:0.150px">....................................................................................................</div>
<div class="a" style="right:695.5px;top:367px;font-size:11px;line-height:13px;color:#111;font-weight:bold">8</div>
<div class="a" style="left:175px;top:386.5px;font-size:11px;line-height:13px;color:#111;font-weight:bold">2.3</div>
<div class="a" style="left:195.5px;top:386.5px;font-size:11px;line-height:13px;color:#111;font-weight:bold">DESAFIO 3</div>
<div class="a" style="left:255px;top:386.5px;width:325px;height:13px;overflow:hidden;font-size:11px;line-height:13px;color:#111;font-weight:bold;letter-spacing:0.150px">....................................................................................................</div>
<div class="a" style="right:695.5px;top:386.5px;font-size:11px;line-height:13px;color:#111;font-weight:bold">9</div>
<div class="a" style="left:175px;top:406px;font-size:11px;line-height:13px;color:#111;font-weight:bold">2.4</div>
<div class="a" style="left:195.5px;top:406px;font-size:11px;line-height:13px;color:#111;font-weight:bold">DESAFIO 4</div>
<div class="a" style="left:255px;top:406px;width:319px;height:13px;overflow:hidden;font-size:11px;line-height:13px;color:#111;font-weight:bold;letter-spacing:0.154px">..................................................................................................</div>
<div class="a" style="right:695.5px;top:406px;font-size:11px;line-height:13px;color:#111;font-weight:bold">11</div>
<div class="a" style="left:162px;top:425px;font-size:11px;line-height:13px;color:#111;font-weight:bold">3 CONCLUSÃO</div>
<div class="a" style="left:244px;top:425px;width:330px;height:13px;overflow:hidden;font-size:11px;line-height:13px;color:#111;font-weight:bold;letter-spacing:0.136px">......................................................................................................</div>
<div class="a" style="right:695.5px;top:425px;font-size:11px;line-height:13px;color:#111;font-weight:bold">13</div>
<div class="a" style="left:162px;top:444px;font-size:11px;line-height:13px;color:#111;font-weight:bold">REFERÊNCIAS</div>
<div class="a" style="left:244px;top:444px;width:330px;height:13px;overflow:hidden;font-size:11px;line-height:13px;color:#111;font-weight:bold;letter-spacing:0.136px">......................................................................................................</div>
<div class="a" style="right:695.5px;top:444px;font-size:11px;line-height:13px;color:#111;font-weight:bold">14</div>
<!-- highlights -->
<div class="a" style="left:1076px;top:309px;width:42px;height:13px;background:#ffff00"></div>
<div class="a" style="left:1015px;top:348px;width:42px;height:12px;background:#94c04a"></div>
<div class="a" style="left:1057px;top:348px;width:3px;height:12px;background:#ffff00"></div>
<div class="a" style="left:1015px;top:360px;width:42px;height:7px;background:#a9c5e9"></div>
<div class="a" style="left:963px;top:367px;width:41px;height:13px;background:#ffff00"></div>
<div class="a" style="left:1078px;top:386px;width:29px;height:13px;background:#ffff00"></div>
<div class="a" style="left:930px;top:405px;width:35px;height:13px;background:#ffff00"></div>
<div class="a" style="left:882px;top:424px;width:28px;height:14px;background:#ffff00"></div>
<div class="a" style="left:1143px;top:245px;font-size:10px;line-height:13px;color:#777">3</div>
<div class="a" style="left:728.5px;top:273px;font-size:11px;line-height:13px;color:#111;font-weight:bold;letter-spacing:0.206px">1 INTRODUÇÃO</div>
<div class="a" style="left:761px;top:310px;font-size:11px;line-height:13px;color:#111;letter-spacing:0.216px">O presente trabalho tem como objetivo desenvolver a análise </div>
<div class="a" style="left:1076px;top:310px;font-size:11px;line-height:13px;color:#111;letter-spacing:-0.406px">XXXXXX</div>
<div class="a" style="left:1118px;top:310px;font-size:11px;line-height:13px;color:#111;letter-spacing:-0.068px">.&nbsp; Para</div>
<div class="a" style="left:728px;top:329.5px;font-size:11px;line-height:13px;color:#111;letter-spacing:0.342px">isso, o desenvolvimento do presente artigo foi dividido em 4 subsecções a fim de</div>
<div class="a" style="left:728px;top:349px;font-size:11px;line-height:13px;color:#111;letter-spacing:0.208px">analisar diferentes aspectos. A primeira faz uma análise </div>
<div class="a" style="left:1015px;top:349px;font-size:11px;line-height:13px;color:#111;letter-spacing:-0.406px">XXXXXX</div>
<div class="a" style="left:1057px;top:349px;font-size:11px;line-height:13px;color:#111;letter-spacing:-0.062px">.</div>
<div class="a" style="left:761px;top:368px;font-size:11px;line-height:13px;color:#111;letter-spacing:0.353px">O segundo subcapítulo discorre sobre </div>
<div class="a" style="left:963px;top:368px;font-size:11px;line-height:13px;color:#111;letter-spacing:-0.606px">XXXXXX</div>
<div class="a" style="left:761px;top:386.5px;font-size:11px;line-height:13px;color:#111;letter-spacing:0.229px">No terceiro subcapítulo deste artigo, encontra-se uma análise </div>
<div class="a" style="left:1078.5px;top:386.5px;font-size:11px;line-height:13px;color:#111;letter-spacing:-0.120px">XXXX</div>
<div class="a" style="left:761px;top:406px;font-size:11px;line-height:13px;color:#111;letter-spacing:0.079px">Na seção 2.4, é feita uma análise </div>
<div class="a" style="left:930px;top:406px;font-size:11px;line-height:13px;color:#111;letter-spacing:-0.422px">XXXXX</div>
<div class="a" style="left:761px;top:425.5px;font-size:11px;line-height:13px;color:#111;letter-spacing:0.227px">Por fim, concluí-se que </div>
<div class="a" style="left:882px;top:425.5px;font-size:11px;line-height:13px;color:#111;letter-spacing:-0.453px">XXXX</div>
<svg class="a" style="left:1079px;top:397px" width="30" height="3" viewBox="0 0 30 3"><polyline points="0.0,0.5 2.0,2.5 4.0,0.5 6.0,2.5 8.0,0.5 10.0,2.5 12.0,0.5 14.0,2.5 16.0,0.5 18.0,2.5 20.0,0.5 22.0,2.5 24.0,0.5 26.0,2.5 28.0,0.5" fill="none" stroke="#2a5a2a" stroke-width="0.9"/></svg>
<svg class="a" style="left:930px;top:416px" width="37" height="3" viewBox="0 0 37 3"><polyline points="0.0,0.5 2.0,2.5 4.0,0.5 6.0,2.5 8.0,0.5 10.0,2.5 12.0,0.5 14.0,2.5 16.0,0.5 18.0,2.5 20.0,0.5 22.0,2.5 24.0,0.5 26.0,2.5 28.0,0.5 30.0,2.5 32.0,0.5 34.0,2.5" fill="none" stroke="#2a5a2a" stroke-width="0.9"/></svg>
<svg class="a" style="left:882px;top:435px" width="30" height="3" viewBox="0 0 30 3"><polyline points="0.0,0.5 2.0,2.5 4.0,0.5 6.0,2.5 8.0,0.5 10.0,2.5 12.0,0.5 14.0,2.5 16.0,0.5 18.0,2.5 20.0,0.5 22.0,2.5 24.0,0.5 26.0,2.5 28.0,0.5" fill="none" stroke="#2a5a2a" stroke-width="0.9"/></svg>
<svg class="a" style="left:1036px;top:340px" width="9" height="3" viewBox="0 0 9 3"><polyline points="0.0,0.5 2.0,2.5 4.0,0.5 6.0,2.5" fill="none" stroke="#4a7a4a" stroke-width="0.9"/></svg>
<svg class="a" style="left:960px;top:365px" width="6" height="17" viewBox="0 0 6 17"><path d="M0.5 0.5H5.5M3 0.5V16.5M0.5 16.5H5.5" stroke="#111" stroke-width="1"/></svg>
<!-- scrollbar -->
<div class="a" style="left:1263px;top:165px;width:17px;height:493px;background:linear-gradient(90deg,#b5cdee 0,#b5cdee 1px,#86a6d6 1px,#7b9dd0 50%,#83a3d4)"></div>
<svg class="a" style="left:1266px;top:170px" width="11" height="6" viewBox="0 0 11 6"><path d="M0.5 5.5L5.5 0.5L10.5 5.5Z" fill="#3b5a8c"/></svg>
<div class="a" style="left:1264px;top:295px;width:15px;height:71px;border:1px solid #4f6a94;border-radius:2px;background:linear-gradient(90deg,#f7f9fc,#e2e8f1 40%,#c9d3e2 70%,#e8edf4)"></div>
<svg class="a" style="left:1268px;top:328px" width="8" height="6" viewBox="0 0 8 6"><path d="M0 0.5H8M0 2.5H8M0 4.5H8" stroke="#6e7f99" stroke-width="0.9"/></svg>
<svg class="a" style="left:1266px;top:597px" width="11" height="6" viewBox="0 0 11 6"><path d="M0.5 0.5L5.5 5.5L10.5 0.5Z" fill="#3b5a8c"/></svg>
<div class="a" style="left:1263px;top:606px;width:17px;height:52px;background:linear-gradient(90deg,#bcd1ee,#a6c0e6)"></div>
<svg class="a" style="left:1266px;top:610px" width="11" height="45" viewBox="0 0 11 45">
 <path d="M2.5 4L5.5 1L8.5 4ZM2.5 7.5L5.5 4.5L8.5 7.5Z" fill="#111"/>
 <circle cx="5.5" cy="21" r="3.3" fill="#b8b8b8" stroke="#222" stroke-width="1"/>
 <path d="M2.5 35L5.5 38L8.5 35ZM2.5 38.5L5.5 41.5L8.5 38.5Z" fill="#111"/>
</svg>
<!-- STATUS BAR -->
<div id="status" class="a"></div>
<div class="a st" style="left:9px">Página: 4 de 7</div>
<div class="a sep" style="left:88px"></div>
<div class="a st" style="left:98px">Palavras: 1/268</div>
<div class="a sep" style="left:182px"></div>
<svg class="a" style="left:190px;top:661px" width="18" height="15" viewBox="0 0 18 15">
 <path d="M1 9L8 5L16 9L9 13Z" fill="#f4f6fb" stroke="#4a5a80" stroke-width="0.9"/>
 <path d="M1 9V10.5L9 14.5L16 10.5V9" fill="#c9d3e6" stroke="#4a5a80" stroke-width="0.9"/>
 <path d="M8 1L14 7M14 1L8 7" stroke="#e02020" stroke-width="1.8"/>
</svg>
<div class="a st" style="left:223px">Português (Brasil)</div>
<div class="a sep" style="left:322px"></div>
<div class="a sep" style="left:1003px"></div>
<div class="a" style="left:1010px;top:660px;width:93px;height:18px;border:1px solid #a6bddc;border-radius:2px;background:linear-gradient(#e6eef9,#d2e1f3)"></div>
<div class="a" style="left:1011px;top:661px;width:18px;height:16px;background:linear-gradient(#ffe5a6,#ffcf73 50%,#ffe29c)"></div>
<div class="a" style="left:1029px;top:661px;width:1px;height:16px;background:#b9cbe3"></div>
<div class="a" style="left:1047px;top:661px;width:1px;height:16px;background:#b9cbe3"></div>
<div class="a" style="left:1065px;top:661px;width:1px;height:16px;background:#b9cbe3"></div>
<div class="a" style="left:1083px;top:661px;width:1px;height:16px;background:#b9cbe3"></div>
<svg class="a" style="left:1011px;top:661px" width="92" height="16" viewBox="0 0 92 16">
 <rect x="4.5" y="2.5" width="9" height="11" fill="#fff" stroke="#2a2a2a"/>
 <path d="M6 5.5H12M6 7.5H12M6 9.5H12M6 11.5H12" stroke="#777" stroke-width="1"/>
 <path d="M21.5 3.5H27.5L28 4L28.5 3.5H34.5V12.5H28.5L28 13L27.5 12.5H21.5Z" fill="#fff" stroke="#2a2a2a"/>
 <path d="M28 4V12.5" stroke="#2a2a2a"/>
 <path d="M23 6.5H26.5M23 8.5H26.5M23 10.5H26.5M29.5 6.5H33M29.5 8.5H33M29.5 10.5H33" stroke="#777"/>
 <rect x="40.5" y="3.5" width="11" height="9" fill="#fff" stroke="#2a2a2a"/>
 <path d="M42 6.5H50M42 8.5H47" stroke="#777"/>
 <circle cx="50.5" cy="11.5" r="2.8" fill="#3d8f6a" stroke="#1d5a40" stroke-width="0.6"/>
 <path d="M58 4.5H60M61 4.5H66M60 7.5H62M63 7.5H66M60 10.5H62M63 10.5H66M58 12.5H60M61 12.5H66" stroke="#444"/>
 <path d="M76 4.5H86M76 6.5H86M76 8.5H86M76 10.5H86M76 12.5H86" stroke="#444"/>
</svg>
<div class="a" style="left:1110px;top:662px;font-size:12px;color:#1f3f78">70%</div>
<div class="a zc" style="left:1141px"></div>
<div class="a" style="left:1145px;top:668px;width:8px;height:2px;background:#333"></div>
<div class="a" style="left:1157px;top:668px;width:103px;height:1px;background:#8ea3c0"></div>
<div class="a" style="left:1157px;top:669px;width:103px;height:1px;background:#f2f6fb"></div>
<div class="a" style="left:1209px;top:664px;width:1px;height:10px;background:#8ea3c0"></div>
<svg class="a" style="left:1187px;top:661px" width="11" height="16" viewBox="0 0 11 16"><path d="M1 1.5H10V10.5L5.5 15L1 10.5Z" fill="#f3f6fb" stroke="#4a5e80" stroke-width="1"/><path d="M5.5 4V10" stroke="#8a9ab8"/></svg>
<div class="a zc" style="left:1259px"></div>
<div class="a" style="left:1263px;top:668px;width:8px;height:2px;background:#333"></div>
<div class="a" style="left:1266px;top:665px;width:2px;height:8px;background:#333"></div>

<!-- TASKBAR -->
<div id="taskbar" class="a"></div>
<div class="a" style="left:0;top:680px;width:1280px;height:1px;background:#34465e"></div>
<div class="a" style="left:0;top:681px;width:1280px;height:1px;background:rgba(255,255,255,0.35)"></div>
<!-- start orb -->
<div class="a" style="left:10px;top:682px;width:34px;height:34px;border-radius:50%;background:radial-gradient(circle at 50% 80%,#3fd0fa 0,#1a7fc8 28%,#0d4484 60%,#0a2448 100%);border:1px solid #15253d;box-shadow:0 0 2px rgba(255,255,255,0.6)"></div>
<svg class="a" style="left:16px;top:689px" width="22" height="20" viewBox="0 0 22 20">
 <path d="M2 4Q5 2 10 4V9Q6 7 2 9Z" fill="#f25022"/>
 <path d="M11 4Q16 6 20 3V8Q16 11 11 9Z" fill="#7fba00"/>
 <path d="M2 10Q6 8 10 10V15Q5 13 2 15Z" fill="#00a4ef"/>
 <path d="M11 10Q16 12 20 9V14Q16 17 11 15Z" fill="#ffb900"/>
</svg>
<div class="a" style="left:12px;top:683px;width:30px;height:14px;border-radius:15px 15px 8px 8px;background:linear-gradient(rgba(255,255,255,0.45),rgba(255,255,255,0.05))"></div>
<!-- grip -->
<svg class="a" style="left:56px;top:685px" width="12" height="30" viewBox="0 0 12 30" id="grip1"><rect x="1.5" y="1.0" width="1.3" height="1.3" fill="#3d4b5e"/><rect x="4.5" y="1.0" width="1.3" height="1.3" fill="#3d4b5e"/><rect x="7.5" y="1.0" width="1.3" height="1.3" fill="#3d4b5e"/><rect x="1.5" y="4.6" width="1.3" height="1.3" fill="#3d4b5e"/><rect x="4.5" y="4.6" width="1.3" height="1.3" fill="#3d4b5e"/><rect x="7.5" y="4.6" width="1.3" height="1.3" fill="#3d4b5e"/><rect x="1.5" y="8.2" width="1.3" height="1.3" fill="#3d4b5e"/><rect x="4.5" y="8.2" width="1.3" height="1.3" fill="#3d4b5e"/><rect x="7.5" y="8.2" width="1.3" height="1.3" fill="#3d4b5e"/><rect x="1.5" y="11.8" width="1.3" height="1.3" fill="#3d4b5e"/><rect x="4.5" y="11.8" width="1.3" height="1.3" fill="#3d4b5e"/><rect x="7.5" y="11.8" width="1.3" height="1.3" fill="#3d4b5e"/><rect x="1.5" y="15.4" width="1.3" height="1.3" fill="#3d4b5e"/><rect x="4.5" y="15.4" width="1.3" height="1.3" fill="#3d4b5e"/><rect x="7.5" y="15.4" width="1.3" height="1.3" fill="#3d4b5e"/><rect x="1.5" y="19.0" width="1.3" height="1.3" fill="#3d4b5e"/><rect x="4.5" y="19.0" width="1.3" height="1.3" fill="#3d4b5e"/><rect x="7.5" y="19.0" width="1.3" height="1.3" fill="#3d4b5e"/><rect x="1.5" y="22.6" width="1.3" height="1.3" fill="#3d4b5e"/><rect x="4.5" y="22.6" width="1.3" height="1.3" fill="#3d4b5e"/><rect x="7.5" y="22.6" width="1.3" height="1.3" fill="#3d4b5e"/><rect x="1.5" y="26.2" width="1.3" height="1.3" fill="#3d4b5e"/><rect x="4.5" y="26.2" width="1.3" height="1.3" fill="#3d4b5e"/><rect x="7.5" y="26.2" width="1.3" height="1.3" fill="#3d4b5e"/></svg>
<!-- IE -->
<svg class="a" style="left:89px;top:683px" width="34" height="32" viewBox="0 0 34 32">
 <defs><radialGradient id="ieg" cx="0.4" cy="0.35" r="0.7"><stop offset="0" stop-color="#9fe0fb"/><stop offset="0.6" stop-color="#2aa3e3"/><stop offset="1" stop-color="#1673c0"/></radialGradient></defs>
 <path d="M27.5 18H11.5Q12 11.5 17.5 11.5Q22 11.5 22.5 15H27.5Q27 6 17.5 6Q6.5 6 6.5 17Q6.5 27.5 17.5 27.5Q25 27.5 27 22H21.5Q20 23 17.5 23Q12 23 11.5 20H27.5Z" fill="url(#ieg)" stroke="#1565b0" stroke-width="0.7"/>
 <path d="M5 28Q1 25 8 15Q16 4 27 2Q33 2 30 9" fill="none" stroke="#f5c842" stroke-width="2.6" stroke-linecap="round"/>
</svg>
<!-- WMP -->
<svg class="a" style="left:152px;top:688px" width="28" height="26" viewBox="0 0 28 26">
 <rect x="6.5" y="2.5" width="18" height="20" fill="#d8e8f6" stroke="#7aa3cf"/>
 <rect x="3.5" y="1.5" width="18" height="20" fill="#e6f0fa" stroke="#7aa3cf"/>
 <circle cx="12.5" cy="11.5" r="8" fill="#f07818"/>
 <circle cx="12.5" cy="11.5" r="8" fill="none" stroke="#c0561a" stroke-width="0.8"/>
 <path d="M10 7V16L17 11.5Z" fill="#fff"/>
</svg>
<!-- task buttons -->
<div class="a tb" style="left:199px;width:55px"></div>
<div class="a tb" style="left:261px;width:59px"></div>
<div class="a tb" style="left:323px;width:58px"></div>
<div class="a tb" style="left:385px;width:59px"></div>
<div class="a tb" style="left:448px;width:51px;background:linear-gradient(#e4ebf4,#ccd7e6 50%,#c0cde0)"></div>
<div class="a" style="left:499px;top:684px;width:4px;height:34px;border:1px solid #56677f;border-left:none;border-radius:0 3px 3px 0;background:#b3c1d6"></div>
<div class="a tb" style="left:509px;width:59px"></div>
<!-- folder -->
<svg class="a" style="left:210px;top:684px" width="34" height="32" viewBox="0 0 34 32">
 <path d="M3 6H13L15 8H30V26H3Z" fill="#f5d77a" stroke="#c9a440" stroke-width="0.8"/>
 <rect x="7" y="5" width="3" height="2" fill="#4ab04a"/><rect x="17" y="7" width="3" height="2" fill="#d84040"/><rect x="23" y="7" width="3" height="2" fill="#4a90d8"/>
 <path d="M2 11H31V28H2Z" fill="#fbe9a8" stroke="#c9a440" stroke-width="0.8"/>
 <path d="M8 20H25V28H21V24H12V28H8Z" fill="#5db2e8" stroke="#2f7fc0" stroke-width="0.8"/>
</svg>
<!-- orange wheel -->
<svg class="a" style="left:275px;top:684px" width="32" height="32" viewBox="0 0 32 32">
 <circle cx="16" cy="16" r="14" fill="#f08a2a"/>
 <circle cx="16" cy="16" r="14" fill="none" stroke="#d86a10" stroke-width="1"/>
 <circle cx="16" cy="16" r="7" fill="none" stroke="#fff" stroke-width="2"/>
 <circle cx="16" cy="16" r="2.5" fill="#fff"/>
 <path d="M16 4V28M4 16H28M7.5 7.5L24.5 24.5M24.5 7.5L7.5 24.5" stroke="#fff" stroke-width="1.8"/>
 <circle cx="16" cy="16" r="4" fill="#f08a2a"/><circle cx="16" cy="16" r="2.2" fill="#fff"/>
</svg>
<!-- pdf -->
<svg class="a" style="left:337px;top:684px" width="32" height="33" viewBox="0 0 32 33">
 <path d="M8 5H22L27 10V31H8Z" fill="#fff" stroke="#aaa" stroke-width="0.8"/>
 <rect x="4" y="3" width="17" height="8" fill="#d81e1e"/>
 <text x="6" y="9.5" font-size="6.5" font-weight="bold" font-family="Liberation Sans" fill="#fff">PDF</text>
 <path d="M12 27Q14 22 17 16Q18 13 17 13Q15 14 18 20Q21 24 24 24Q25 23 20 22Q15 22 12 27" fill="none" stroke="#d81e1e" stroke-width="1.4"/>
</svg>
<!-- excel -->
<svg class="a" style="left:397px;top:683px" width="34" height="34" viewBox="0 0 34 34">
 <defs><linearGradient id="xg" x1="0" y1="0" x2="1" y2="1"><stop offset="0" stop-color="#e8f4d8"/><stop offset="1" stop-color="#7bb35a"/></linearGradient></defs>
 <path d="M4 7Q4 3 9 3H22L24 5V26H4Z" fill="url(#xg)" stroke="#5a9a3a" stroke-width="0.9"/>
 <path d="M9 10L29 12L28 30L8 28Z" fill="#f4faee" stroke="#8ab870" stroke-width="0.8"/>
 <path d="M19 14.5H22.5V18H19ZM24 14.5H27.5V18H24ZM11 20.5H14.5V24H11ZM16 20.5H19.5V24H16ZM21 20.5H24.5V24H21ZM24 19H27.5V22.5H24Z" fill="#4f9a38"/>
 <path d="M10 11L17 19M17 11L10 19" stroke="#2f7a20" stroke-width="3"/>
</svg>
<!-- word -->
<svg class="a" style="left:457px;top:683px" width="34" height="34" viewBox="0 0 34 34">
 <defs><linearGradient id="wg" x1="0" y1="0" x2="1" y2="0"><stop offset="0" stop-color="#2a5ab8"/><stop offset="1" stop-color="#bcd2f0"/></linearGradient></defs>
 <path d="M3 8Q3 3 8 3H22L24 5V25H3Z" fill="url(#wg)" stroke="#3a6ac0" stroke-width="0.9"/>
 <path d="M8 8L29 9.5L28 29L7 27.5Z" fill="#f6f9fd" stroke="#9ab4d8" stroke-width="0.8"/>
 <text x="10" y="17" font-size="9" font-weight="bold" font-style="italic" font-family="Liberation Sans" fill="#2f5aa8">W</text>
 <path d="M21 11.5H26M21 14H26M21 16.5H26M10 20H26M10 22.5H26" stroke="#2f5aa8" stroke-width="1.6"/>
</svg>
<!-- OBS -->
<svg class="a" style="left:522px;top:683px" width="34" height="34" viewBox="0 0 34 34">
 <circle cx="17" cy="17" r="13.5" fill="#262626" stroke="#777" stroke-width="1"/>
 <path d="M17 16Q12 11 16.5 6.5Q19 5 21 6.5" fill="none" stroke="#eee" stroke-width="1.7" stroke-linecap="round"/>
 <path d="M18 17.5Q24.5 16 26 22Q26 25 23.5 26" fill="none" stroke="#eee" stroke-width="1.7" stroke-linecap="round"/>
 <path d="M16 18Q14 24.5 8.5 24Q6 23 6 20.5" fill="none" stroke="#eee" stroke-width="1.7" stroke-linecap="round"/>
</svg>
<!-- tray -->
<svg class="a" style="left:874px;top:685px" width="12" height="30" viewBox="0 0 12 30" id="grip2"><rect x="1.5" y="1.0" width="1.3" height="1.3" fill="#3d4b5e"/><rect x="4.5" y="1.0" width="1.3" height="1.3" fill="#3d4b5e"/><rect x="7.5" y="1.0" width="1.3" height="1.3" fill="#3d4b5e"/><rect x="1.5" y="4.6" width="1.3" height="1.3" fill="#3d4b5e"/><rect x="4.5" y="4.6" width="1.3" height="1.3" fill="#3d4b5e"/><rect x="7.5" y="4.6" width="1.3" height="1.3" fill="#3d4b5e"/><rect x="1.5" y="8.2" width="1.3" height="1.3" fill="#3d4b5e"/><rect x="4.5" y="8.2" width="1.3" height="1.3" fill="#3d4b5e"/><rect x="7.5" y="8.2" width="1.3" height="1.3" fill="#3d4b5e"/><rect x="1.5" y="11.8" width="1.3" height="1.3" fill="#3d4b5e"/><rect x="4.5" y="11.8" width="1.3" height="1.3" fill="#3d4b5e"/><rect x="7.5" y="11.8" width="1.3" height="1.3" fill="#3d4b5e"/><rect x="1.5" y="15.4" width="1.3" height="1.3" fill="#3d4b5e"/><rect x="4.5" y="15.4" width="1.3" height="1.3" fill="#3d4b5e"/><rect x="7.5" y="15.4" width="1.3" height="1.3" fill="#3d4b5e"/><rect x="1.5" y="19.0" width="1.3" height="1.3" fill="#3d4b5e"/><rect x="4.5" y="19.0" width="1.3" height="1.3" fill="#3d4b5e"/><rect x="7.5" y="19.0" width="1.3" height="1.3" fill="#3d4b5e"/><rect x="1.5" y="22.6" width="1.3" height="1.3" fill="#3d4b5e"/><rect x="4.5" y="22.6" width="1.3" height="1.3" fill="#3d4b5e"/><rect x="7.5" y="22.6" width="1.3" height="1.3" fill="#3d4b5e"/><rect x="1.5" y="26.2" width="1.3" height="1.3" fill="#3d4b5e"/><rect x="4.5" y="26.2" width="1.3" height="1.3" fill="#3d4b5e"/><rect x="7.5" y="26.2" width="1.3" height="1.3" fill="#3d4b5e"/></svg>
<div class="a" style="left:893px;top:691px;font-size:12px;color:#f2f5fa">PT</div>
<svg class="a" style="left:922px;top:692px" width="17" height="17" viewBox="0 0 17 17"><rect x="0.5" y="0.5" width="15" height="15" fill="#3a0a0a" stroke="#d02020"/><path d="M3 12Q6 7 8 3.5Q9 2 8.3 3Q7 5 10 9Q12 11 13 10.5Q12.5 9.5 8 10Q5 10.5 3 12" fill="none" stroke="#e8e0e0" stroke-width="1"/><path d="M10 3L13 2.5L12 5" fill="none" stroke="#d08080" stroke-width="0.8"/></svg>
<svg class="a" style="left:946px;top:692px" width="17" height="17" viewBox="0 0 17 17"><circle cx="8" cy="8" r="7.3" fill="#151515" stroke="#e8e8e8" stroke-width="0.9"/><path d="M8 7.5Q5 5 7.5 2.5M8.5 8.5Q12 8 12.5 11.5M7.5 8.5Q6.5 12 3.5 11.5" fill="none" stroke="#ddd" stroke-width="1"/><circle cx="5" cy="12" r="2.6" fill="#ee1111"/></svg>
<svg class="a" style="left:970px;top:692px" width="17" height="17" viewBox="0 0 17 17"><rect x="1.5" y="2.5" width="13" height="10" fill="#b01010" stroke="#200" stroke-width="0.8"/><path d="M3 5L6 8M9 5L6 9" stroke="#f06060" stroke-width="0.6"/><path d="M1 14H14" stroke="#111" stroke-width="1.2" stroke-dasharray="1.2,0.8"/><path d="M3 1.5H8" stroke="#111" stroke-width="1"/></svg>
<svg class="a" style="left:994px;top:692px" width="17" height="17" viewBox="0 0 17 17"><rect x="0.5" y="0.5" width="15" height="15" fill="#5a7a6a" stroke="#344a40"/><path d="M8.5 3V11.5" stroke="#e8f0ec" stroke-width="1.2"/><path d="M8.5 3Q10 5 11.5 5.5" fill="none" stroke="#e8f0ec" stroke-width="1.2"/><ellipse cx="6.5" cy="11.5" rx="2.3" ry="1.8" fill="#e8f0ec"/></svg>
<svg class="a" style="left:1018px;top:692px" width="17" height="17" viewBox="0 0 17 17"><ellipse cx="8" cy="8" rx="6" ry="8" fill="#0f3f8f"/><path d="M5 5L11 10.5L8 13V3L11 5.5L5 11" fill="none" stroke="#fff" stroke-width="1.1"/></svg>
<svg class="a" style="left:1042px;top:692px" width="17" height="17" viewBox="0 0 17 17"><rect x="1.5" y="3.5" width="9" height="10" fill="#c8c8c8" stroke="#222" stroke-width="1"/><rect x="6" y="4.5" width="7" height="6" fill="#f4f4f4" stroke="#222" stroke-width="0.9"/><path d="M8 1.5V4.5M11 1.5V4.5M9.5 10.5V15" stroke="#222" stroke-width="1.2"/></svg>
<svg class="a" style="left:1066px;top:692px" width="17" height="17" viewBox="0 0 17 17"><rect x="3.5" y="0.5" width="7" height="14" fill="#e8e8e8" stroke="#444" stroke-width="0.8"/><rect x="5" y="3" width="4" height="9" fill="#6ab04a"/><circle cx="11" cy="11.5" r="4.3" fill="#2aa02a" stroke="#e8ffe8" stroke-width="0.6"/><path d="M8.8 11.5L10.5 13.2L13.3 9.8" fill="none" stroke="#fff" stroke-width="1.2"/></svg>
<svg class="a" style="left:1090px;top:692px" width="17" height="17" viewBox="0 0 17 17"><path d="M2 1V15.5" stroke="#222" stroke-width="2.2"/><path d="M2 1V15.5" stroke="#f4f4f4" stroke-width="1"/><path d="M3 2.5Q6 1 9 3Q11 4.5 15 3.5L13.5 6.5L15 8Q11 9 9 7.5Q6 6 3 7.5Z" fill="#f4f4f4" stroke="#333" stroke-width="0.8"/></svg>
<svg class="a" style="left:1114px;top:692px" width="17" height="17" viewBox="0 0 17 17"><path d="M1.5 6H4L8 2.5V13.5L4 10H1.5Z" fill="#f0f0f0" stroke="#333" stroke-width="0.8"/><path d="M10 6Q11 8 10 10M12 4Q14 8 12 12M14 2.5Q16.5 8 14 13.5" fill="none" stroke="#eee" stroke-width="0.9"/></svg>
<svg class="a" style="left:1138px;top:692px" width="17" height="17" viewBox="0 0 17 17"><path d="M1.5 11.5H4.5V14.5H1.5ZM5.5 9.5H8.5V14.5H5.5ZM9.5 6.5H12.5V14.5H9.5ZM13 3.5H15.5V14.5H13Z" fill="#9aa0a8" stroke="#2a3040" stroke-width="0.8"/><path d="M1.5 11.5H4.5V14.5H1.5ZM5.5 9.5H8.5V14.5H5.5Z" fill="#f4f4f4"/></svg>
<svg class="a" style="left:1162px;top:692px" width="17" height="17" viewBox="0 0 17 17"><path d="M4 1.5Q7 0 9 2Q13 0 15 3Q13 6 14 9Q16 13 12 14H2Q0 11 2 8Q1 4 4 1.5Z" fill="#f77a10"/><path d="M8 5L2.5 15H13.5Z" fill="#f4d030" stroke="#7a5a00" stroke-width="0.6"/><path d="M8 8V11.5M8 12.5V13.5" stroke="#222" stroke-width="1.2"/></svg>
<div class="a" style="left:1195px;top:683.5px;width:60px;text-align:center;font-size:12px;line-height:17px;color:#f2f5fa">11:26<br>21/08/2018</div>
<div class="a" style="left:1263px;top:681px;width:17px;height:39px;background:linear-gradient(90deg,#8ea2ba,#aab9cc 40%,#8196b0);border-left:1px solid #4a5a70;border-top:1px solid #4a5a70"></div>

</body></html>
